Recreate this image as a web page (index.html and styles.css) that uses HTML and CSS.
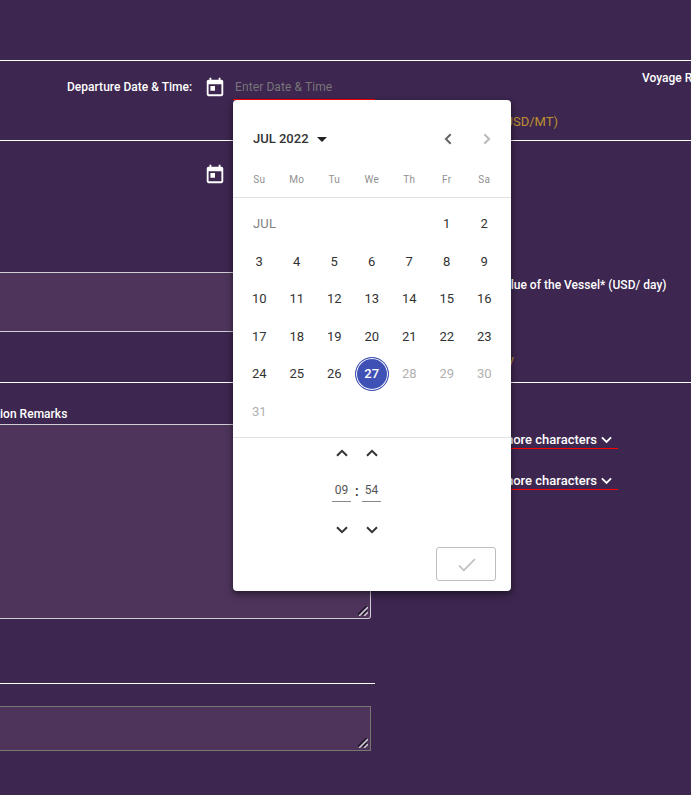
FILE: index.html
```
<!DOCTYPE html>
<html lang="en">
<head>
<meta charset="utf-8">
<title>Voyage details</title>
<link rel="stylesheet" href="styles.css">
</head>
<body>
<svg class="defs" aria-hidden="true">
  <symbol id="calendar" viewBox="0 0 24 24"><path d="M19 4h-1V2h-2v2H8V2H6v2H5c-1.110 0-1.990.9-1.990 2L3 20c0 1.100.89 2 2 2h14c1.100 0 2-.9 2-2V6c0-1.100-.9-2-2-2zm0 16H5V9h14v11zM7 11h5v5H7z"/></symbol>
  <symbol id="chevron" viewBox="0 0 12 8"><path d="M1 1.200 6 6.200 11 1.200" fill="none" stroke="currentColor" stroke-width="2"/></symbol>
  <symbol id="grip" viewBox="0 0 10 10"><path d="M0 9 9 0M5 9 9 5" stroke="#21132c" stroke-width="2"/><path d="M1 10 10 1M6 10 10 6" stroke="#c8c3cc" stroke-width="1.700"/></symbol>
</svg>
<main class="page">
  <header class="band top"></header>
  <section class="band schedule">
    <label class="label departure">Departure Date &amp; Time:</label>
    <svg class="calendar"><use href="#calendar"/></svg>
    <div class="date-input">Enter Date &amp; Time</div>
    <span class="unit">(USD/MT)</span>
    <span class="label voyage">Voyage R</span>
  </section>
  <section class="band vessel">
    <div class="left">
      <svg class="calendar second"><use href="#calendar"/></svg>
      <div class="field short"></div>
    </div>
    <div class="right">
      <span class="label value">Value of the Vessel* (USD/ day)</span>
      <span class="note">y</span>
    </div>
  </section>
  <section class="band remarks">
    <div class="left">
      <div class="label remarks-label">ion Remarks</div>
      <div class="field tall"><svg class="grip"><use href="#grip"/></svg></div>
      <hr class="rule">
      <div class="field last"><svg class="grip"><use href="#grip"/></svg></div>
    </div>
    <div class="right selects">
      <div class="select">more characters <svg class="chev"><use href="#chevron"/></svg></div>
      <div class="select">more characters <svg class="chev"><use href="#chevron"/></svg></div>
    </div>
  </section>
</main>
<div class="picker">
  <div class="picker-head">
    <div class="controls">
      <span class="month">JUL 2022</span><i class="caret"></i>
      <svg class="nav prev" viewBox="0 0 8 12"><path d="M6.700 1.200 1.900 6l4.800 4.800"/></svg>
      <svg class="nav next" viewBox="0 0 8 12"><path d="M1.300 1.200 6.100 6l-4.800 4.800"/></svg>
    </div>
    <div class="week"><span>Su</span><span>Mo</span><span>Tu</span><span>We</span><span>Th</span><span>Fr</span><span>Sa</span></div>
  </div>
  <div class="days">
    <span class="name">JUL</span><span>1</span><span>2</span>
    <span>3</span><span>4</span><span>5</span><span>6</span><span>7</span><span>8</span><span>9</span>
    <span>10</span><span>11</span><span>12</span><span>13</span><span>14</span><span>15</span><span>16</span>
    <span>17</span><span>18</span><span>19</span><span>20</span><span>21</span><span>22</span><span>23</span>
    <span>24</span><span>25</span><span>26</span><span class="selected"><b>27</b></span><span class="off">28</span><span class="off">29</span><span class="off">30</span>
    <span class="off">31</span>
  </div>
  <div class="time">
    <div class="spin"><svg class="chev up"><use href="#chevron"/></svg><span>09</span><svg class="chev"><use href="#chevron"/></svg></div>
    <span class="colon">:</span>
    <div class="spin"><svg class="chev up"><use href="#chevron"/></svg><span>54</span><svg class="chev"><use href="#chevron"/></svg></div>
  </div>
  <div class="confirm"><svg viewBox="0 0 18 14"><path d="M1 7.500 5.800 12.300 17 1"/></svg></div>
</div>
</body>
</html>
```
FILE: styles.css
```
* { box-sizing: border-box; }
body { margin: 0; background: #3d264f; color: #fff; font: 12px/16px Roboto, sans-serif; overflow: hidden; }
.defs { position: absolute; width: 0; height: 0; }
.page { width: 691px; height: 795px; overflow: hidden; }
.band { border-bottom: 1px solid #fff; display: flex; }
.label { font-weight: 500; letter-spacing: .02px; white-space: nowrap; }
.top { height: 61px; }
.schedule { height: 80px; }
.schedule > * { flex: none; }
.departure { width: 137px; margin: 18px 0 0 67px; }
.calendar { width: 22px; height: 22px; margin-top: 15px; flex: none; fill: #fff; }
.date-input { width: 142px; height: 39px; margin-left: 7px; padding: 18px 0 0 2px; color: #77757a; border-bottom: 1px solid red; white-space: nowrap; letter-spacing: .1px; }
.unit { width: 183px; margin-top: 53px; text-align: right; color: #bd9030; font-size: 13px; }
.voyage { margin: 9px 0 0 84px; }
.vessel { height: 242px; }
.left { width: 375px; flex: none; }
.right { flex: 1; display: flex; flex-direction: column; }
.second { display: block; margin: 22px 0 0 204px; }
.field { width: 371px; background: #4e345b; border: 1px solid #cfced7; border-left: 0; display: flex; justify-content: flex-end; align-items: flex-end; }
.short { height: 60px; margin-top: 87px; }
.value { width: 291.5px; margin-top: 136px; text-align: right; }
.note { width: 139px; margin-top: 59px; text-align: right; color: #bd9030; font-size: 13px; }
.remarks { border: 0; height: 412px; }
.remarks-label { margin-top: 23px; }
.tall { height: 195px; margin-top: 2px; border-radius: 0 0 3px; }
.grip { width: 10px; height: 10px; margin: 0 2px 2px 0; }
.rule { height: 1px; margin: 64px 0 22px; border: 0; background: #fff; }
.last { height: 45px; border-color: #777970; }
.selects { padding-top: 48px; align-items: flex-start; gap: 23px; }
.select { width: 243px; height: 18px; padding: 1px 6px 0 0; display: flex; gap: 4px; justify-content: flex-end; border-bottom: 1px solid red; font-size: 13px; font-weight: 500; white-space: nowrap; }
.chev { width: 12px; height: 8px; }
.select .chev { width: 11px; margin-top: 4px; }
.picker { position: absolute; left: 233px; top: 100px; width: 278px; height: 491px; background: #fff; border-radius: 4px; color: #333; box-shadow: 0 2px 5px rgba(0,0,0,.4), 0 5px 10px rgba(0,0,0,.2); display: flex; flex-direction: column; }
.picker-head { height: 98px; border-bottom: 1px solid #e0e0e0; }
.controls { display: flex; align-items: center; height: 39px; margin-top: 19px; padding: 0 20px; }
.month { font-size: 13px; font-weight: 500; color: #333; }
.caret { margin: 2px auto 0 8px; border: 5px solid transparent; border-top-color: #222; border-bottom: 0; }
.nav { width: 8px; height: 12px; fill: none; stroke: #666; stroke-width: 2; }
.next { margin-left: 31px; stroke: #bbb; }
.week { display: grid; grid-template-columns: repeat(7, 37.5px); margin: 13px 8px 0 7.500px; text-align: center; font-size: 10px; line-height: 17px; color: #909090; letter-spacing: .3px; }
.days { display: grid; grid-template-columns: repeat(7, 37.5px); grid-auto-rows: 37.5px; padding: 7px 0 0 7.500px; height: 239px; line-height: 37.5px; text-align: center; font-size: 13px; }
.name { grid-column: span 5; text-align: left; padding-left: 12.5px; color: #808080; letter-spacing: .2px; }
.off { color: #b0b0b0; }
.selected { display: flex; align-items: center; justify-content: center; }
.selected b { width: 34px; height: 34px; line-height: 30px; border: 1px solid #3f51b5; border-radius: 50%; background: #3f51b5; box-shadow: inset 0 0 0 1px #fff; color: #fff; font-weight: 500; padding-top: 1px; }
.time { height: 99px; border-top: 1px solid #e0e0e0; padding: 11px 0 0 99px; display: flex; gap: 4px; }
.spin { width: 19px; height: 87px; display: flex; flex-direction: column; align-items: center; }
.spin span { width: 19px; height: 25px; margin: 20px 0 24px; padding-top: 5px; border-bottom: 1px solid #888; text-align: center; line-height: 16px; color: #555; }
.up { transform: rotate(180deg); }
.colon { width: 3px; margin-top: 34px; font-size: 14px; font-weight: 500; }
.confirm { width: 60px; height: 34px; margin: 11px 15px 0 auto; border: 1px solid #bdbdbd; border-radius: 3px; display: flex; align-items: center; justify-content: center; }
.confirm svg { width: 18px; height: 14px; margin: 2px 0 0 2px; fill: none; stroke: #bdbdbd; stroke-width: 1.6; }
```
